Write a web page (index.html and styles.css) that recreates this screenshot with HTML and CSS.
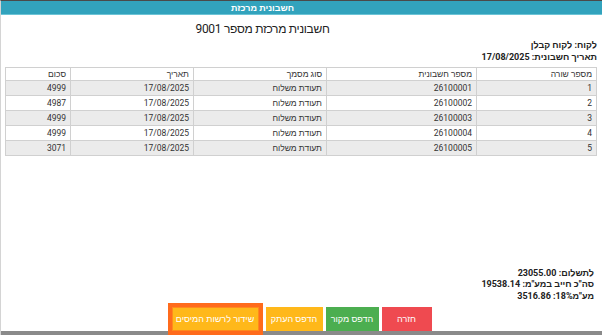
FILE: index.html
```html
<!DOCTYPE html>
<html lang="he" dir="rtl">
<head>
<meta charset="utf-8">
<title>חשבונית מרכזת</title>
<link rel="stylesheet" href="styles.css">
</head>
<body>
<div class="modal">
  <div class="titlebar"><span class="title-text">חשבונית מרכזת</span></div>
  <div class="content">
    <h1 class="heading">חשבונית מרכזת מספר 9001</h1>
    <div class="info">
      <div>לקוח: לקוח קבלן</div>
      <div>תאריך חשבונית: 17/08/2025</div>
    </div>
    <table class="grid">
      <colgroup>
        <col class="c-line"><col class="c-inv"><col class="c-type"><col class="c-date"><col class="c-sum">
      </colgroup>
      <thead>
        <tr><th>מספר שורה</th><th>מספר חשבונית</th><th>סוג מסמך</th><th>תאריך</th><th>סכום</th></tr>
      </thead>
      <tbody>
        <tr><td>1</td><td>26100001</td><td>תעודת משלוח</td><td>17/08/2025</td><td>4999</td></tr>
        <tr><td>2</td><td>26100002</td><td>תעודת משלוח</td><td>17/08/2025</td><td>4987</td></tr>
        <tr><td>3</td><td>26100003</td><td>תעודת משלוח</td><td>17/08/2025</td><td>4999</td></tr>
        <tr><td>4</td><td>26100004</td><td>תעודת משלוח</td><td>17/08/2025</td><td>4999</td></tr>
        <tr><td>5</td><td>26100005</td><td>תעודת משלוח</td><td>17/08/2025</td><td>3071</td></tr>
      </tbody>
    </table>
    <div class="totals">
      <div>לתשלום: 23055.00</div>
      <div>סה"כ חייב במע"מ: 19538.14</div>
      <div>מע"מ18%: 3516.86</div>
    </div>
    <div class="buttons">
      <button class="btn btn-red">חזרה</button>
      <button class="btn btn-green">הדפס מקור</button>
      <button class="btn btn-yellow">הדפס העתק</button>
      <button class="btn btn-yellow btn-focus">שידור לרשות המיסים</button>
    </div>
  </div>
</div>
</body>
</html>
```
FILE: styles.css
```css
html, body {
  margin: 0;
  padding: 0;
}
body {
  background: #8a8a8a;
  border-top: 1px solid #4a4a4a;
  border-left: 1px solid #d4d4d4;
  height: 334px;
  overflow: hidden;
  font-family: Roboto, "Liberation Sans", sans-serif;
  color: #222;
}
.modal {
  width: 601px;
  height: 330px;
  background: #fff;
  display: flex;
  flex-direction: column;
}
.titlebar {
  height: 13px;
  background: #32a3bd;
  border-bottom: 1px solid #6cc4d6;
  display: flex;
  justify-content: center;
  align-items: center;
  padding-right: 78px;
}
.title-text {
  color: #fff;
  font-size: 9px;
  font-weight: bold;
}
.content {
  flex: 1;
  display: flex;
  flex-direction: column;
  padding: 0 5px 0 5px;
}
.heading {
  margin: 5px 0 0 0;
  font-size: 12px;
  line-height: 18px;
  letter-spacing: -0.3px;
  font-weight: normal;
  text-align: center;
  padding-right: 78px;
  color: #222;
}
.info {
  margin-top: 1px;
  font-size: 9px;
  line-height: 12px;
  font-weight: bold;
  color: #222;
}
.grid {
  margin-top: 4px;
  width: 591px;
  border-collapse: collapse;
  table-layout: fixed;
  font-size: 8.5px;
  color: #333;
}
.c-line { width: 120px; }
.c-inv { width: 150px; }
.c-type { width: 133px; }
.c-date { width: 123px; }
.c-sum { width: 65px; }
.grid th, .grid td {
  border: 1px solid #d0d0d0;
  text-align: right;
  padding: 0 4px;
  white-space: nowrap;
}
.grid th {
  height: 12px;
  font-weight: normal;
  background: #fff;
}
.grid td {
  height: 14px;
}
.grid tbody tr:nth-child(odd) td {
  background: #ebebeb;
}
.totals {
  margin-top: auto;
  padding-right: 3px;
  font-size: 9px;
  line-height: 11.5px;
  font-weight: bold;
  color: #222;
}
.buttons {
  margin-top: 5px;
  display: flex;
  justify-content: center;
  gap: 3px;
}
.btn {
  height: 24px;
  border: none;
  color: #fff;
  font-family: Roboto, "Liberation Sans", sans-serif;
  font-size: 9px;
  padding: 0;
  margin: 0;
  white-space: nowrap;
  flex: none;
}
.btn-red {
  background: #ef4a50;
  width: 50px;
}
.btn-green {
  background: #4cae50;
  width: 53px;
}
.btn-yellow {
  background: #ffb81a;
  width: 57px;
}
.btn-focus {
  width: 87px;
  margin-inline-start: 4px;
  box-shadow: 0 0 0 4px #ff6b1c;
  border: 1px solid #ff8a1c;
}
```
